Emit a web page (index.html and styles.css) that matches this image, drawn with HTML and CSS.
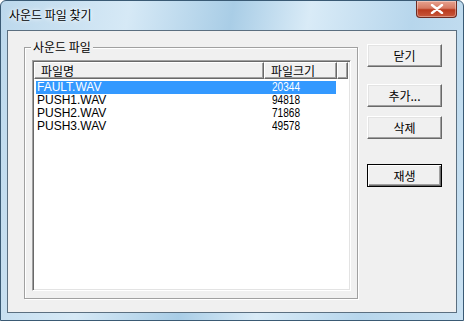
FILE: index.html
```html
<!DOCTYPE html>
<html>
<head>
<meta charset="utf-8">
<link rel="stylesheet" href="styles.css">
</head>
<body>
<div class="window">
  <div class="titlebar">
    <span class="title">사운드 파일 찾기</span>
    <div class="close">
      <svg width="14" height="10" viewBox="0 0 14 10"><path d="M2 1 L12 9 M12 1 L2 9" stroke="#fff" stroke-width="2.4" stroke-linecap="round"/></svg>
    </div>
  </div>
  <div class="client">
    <div class="group">
      <span class="legend">사운드 파일</span>
      <div class="list">
        <div class="header">
          <div class="hcell c1">파일명</div>
          <div class="hcell c2">파일크기</div>
          <div class="hcell c3"></div>
        </div>
        <div class="rows">
          <div class="row sel"><span class="c1">FAULT.WAV</span><span class="c2"><span class="num">20344</span></span></div>
          <div class="row"><span class="c1">PUSH1.WAV</span><span class="c2"><span class="num">94818</span></span></div>
          <div class="row"><span class="c1">PUSH2.WAV</span><span class="c2"><span class="num">71868</span></span></div>
          <div class="row"><span class="c1">PUSH3.WAV</span><span class="c2"><span class="num">49578</span></span></div>
        </div>
      </div>
    </div>
    <div class="buttons">
      <div class="btn b-close">닫기</div>
      <div class="btn b-add">추가...</div>
      <div class="btn b-del">삭제</div>
      <div class="btn b-play default">재생</div>
    </div>
  </div>
</div>
</body>
</html>
```
FILE: styles.css
```css
html, body {
  margin: 0;
  padding: 0;
}
body {
  width: 464px;
  height: 321px;
  overflow: hidden;
  font-family: "Noto Sans CJK KR", "DejaVu Sans", sans-serif;
  font-size: 12px;
  color: #000;
}
.window {
  width: 464px;
  height: 321px;
  box-sizing: border-box;
  border: 1px solid #3a5a74;
  border-radius: 6px 6px 0 0;
  background: linear-gradient(100deg, #bcd8ec 0%, #d6e9f6 25%, #a9cde6 45%, #d9ebf7 60%, #b7d6ec 80%, #c9e1f2 100%);
  display: flex;
  flex-direction: column;
  padding: 0 6px 7px 6px;
}
.titlebar {
  height: 29px;
  display: flex;
  align-items: flex-start;
  justify-content: space-between;
}
.title {
  margin-top: 6px;
  margin-left: 2px;
  font-size: 12px;
  line-height: 16px;
  text-shadow: 0 0 6px #fff, 0 0 3px #fff;
}
.close {
  width: 41px;
  height: 17px;
  box-sizing: border-box;
  border: 1px solid #6d2b22;
  border-top: none;
  border-radius: 0 0 4px 4px;
  background: linear-gradient(#e7a28f 0%, #d67a63 45%, #b93a1e 55%, #c8583c 100%);
  display: flex;
  align-items: center;
  justify-content: center;
  box-shadow: inset 0 0 0 1px rgba(255,255,255,0.35);
}
.client {
  flex: 1;
  background: #f0f0f0;
  border: 1px solid #5b6f80;
  display: flex;
  padding: 0 14px 13px 16px;
}
.group {
  position: relative;
  width: 332px;
  margin-top: 16px;
  border: 1px solid #a0a0a0;
  box-shadow: 1px 1px 0 #fff, inset 1px 1px 0 #fff;
  display: flex;
  padding: 12px 6px 7px 7px;
}
.legend {
  position: absolute;
  top: -9px;
  left: 6px;
  padding: 0 2px;
  background: #f0f0f0;
  line-height: 16px;
}
.list {
  flex: 1;
  background: #fff;
  border-top: 1px solid #a0a0a0;
  border-left: 1px solid #a0a0a0;
  border-right: 1px solid #fff;
  border-bottom: 1px solid #fff;
  box-shadow: inset 1px 1px 0 #696969, inset -1px -1px 0 #e3e3e3;
  padding: 1px 2px 2px 1px;
  display: flex;
  flex-direction: column;
}
.header {
  display: flex;
  height: 17px;
  background: #f0f0f0;
}
.hcell {
  box-sizing: border-box;
  height: 17px;
  border-top: 1px solid #fff;
  border-left: 1px solid #fff;
  border-right: 1px solid #696969;
  border-bottom: 1px solid #696969;
  box-shadow: inset -1px -1px 0 #a0a0a0;
  line-height: 15px;
  padding-left: 6px;
}
.hcell.c1 { width: 230px; }
.hcell.c2 { width: 73px; }
.hcell.c3 { flex: 1; }
.rows {
  padding-top: 2px;
  font-family: "Liberation Sans", Arial, sans-serif;
}
.row {
  display: flex;
  height: 13px;
  line-height: 13px;
  width: 300px;
  margin-left: 2px;
  overflow: hidden;
}
.row .c1 { width: 226px; padding-left: 1px; }
.row .c2 { width: 63px; padding-left: 9px; }
.num {
  display: inline-block;
  transform: scaleX(0.84);
  transform-origin: left center;
}
.row.sel {
  background: #3399ff;
  color: #fff;
}
.buttons {
  display: flex;
  flex-direction: column;
  margin-left: 9px;
  padding-top: 13px;
}
.btn {
  width: 75px;
  height: 23px;
  box-sizing: border-box;
  border-top: 1px solid #fff;
  border-left: 1px solid #fff;
  border-right: 1px solid #696969;
  border-bottom: 1px solid #696969;
  box-shadow: inset -1px -1px 0 #a0a0a0, inset 1px 1px 0 #e3e3e3;
  background: #f0f0f0;
  display: flex;
  align-items: center;
  justify-content: center;
  line-height: 14px;
}
.b-add { margin-top: 17px; }
.b-del { margin-top: 9px; }
.b-play { margin-top: 25px; }
.btn.default {
  border: 1px solid #000;
  box-shadow: inset 1px 1px 0 #fff, inset -1px -1px 0 #696969, inset -2px -2px 0 #a0a0a0;
}
```
